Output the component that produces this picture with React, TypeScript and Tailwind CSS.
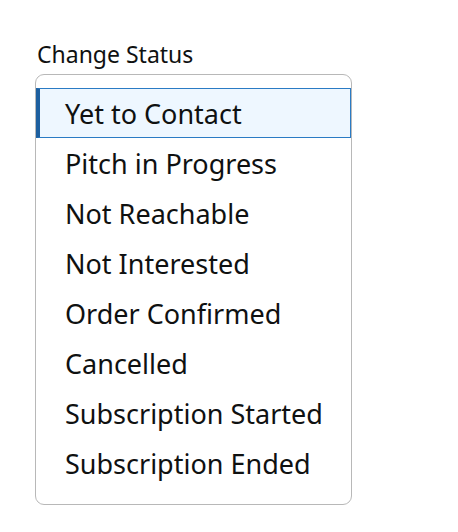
import { useState } from 'react'

const statuts = [
  'Yet to Contact',
  'Pitch in Progress',
  'Not Reachable',
  'Not Interested',
  'Order Confirmed',
  'Cancelled',
  'Subscription Started',
  'Subscription Ended',
]

export default function App() {
  const [choisi, setChoisi] = useState(statuts[0])

  return (
    <div className="min-h-screen bg-white pl-[35px] pt-[40px] text-[#0f1111]" style={{ fontFamily: '"Noto Sans", "Open Sans", sans-serif' }}>
      <label className="ml-[2px] block text-[23px] leading-[29px]">Change Status</label>
      <div role="listbox" className="mt-[5px] w-[317px] rounded-[9px] border border-[#b8b8b8] pb-[16px] pt-[13px]">
        {statuts.map((s) => {
          const actif = s === choisi
          return (
            <div
              key={s}
              role="option"
              aria-selected={actif}
              onClick={() => setChoisi(s)}
              className={
                actif
                  ? 'flex h-[50px] cursor-pointer items-center border border-l-4 border-[#2a7bc4] border-l-[#1d5f9f] bg-[#eef7ff] pl-[25px] pt-[2px] text-[27px]'
                  : 'flex h-[50px] cursor-pointer items-center border border-transparent pl-[28px] pt-[2px] text-[27px]'
              }
            >
              {s}
            </div>
          )
        })}
      </div>
    </div>
  )
}
